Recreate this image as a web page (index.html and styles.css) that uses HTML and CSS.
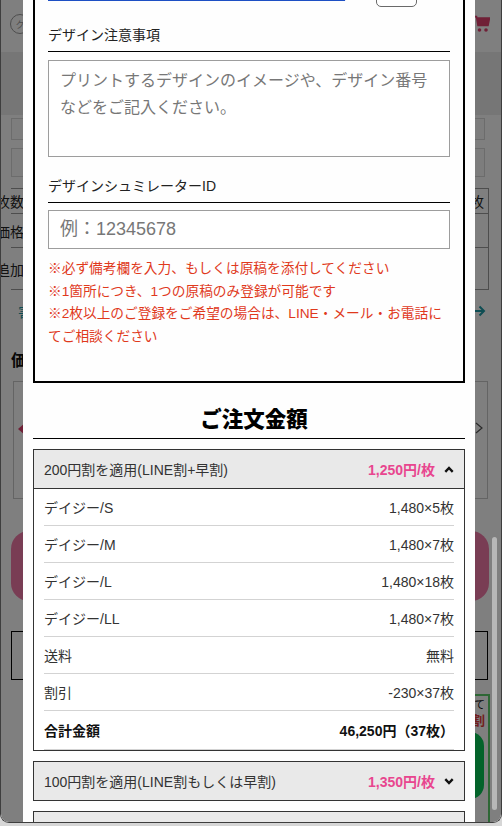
FILE: index.html
```html
<!DOCTYPE html>
<html lang="ja">
<head>
<meta charset="utf-8">
<title>ご注文金額</title>
<link rel="stylesheet" href="styles.css">
</head>
<body>
<div class="window">
  <div class="page">
    <header class="bg-header">
      <span class="bg-logo">ク</span>
      <svg class="bg-cart" width="17" height="19" viewBox="0 0 17 19">
        <path d="M0 1.5h3.5l1.5 9h10l1.5-7.5H4" fill="#e0406e" stroke="#e0406e" stroke-width="1.6"/>
        <circle cx="6.5" cy="15" r="1.8" fill="#e0406e"/>
        <circle cx="13" cy="15" r="1.8" fill="#e0406e"/>
      </svg>
    </header>
    <div class="bg-band"></div>
    <div class="bg-fields">
      <div class="bg-field"></div>
      <div class="bg-field tall"></div>
    </div>
    <div class="bg-table">
      <div class="bg-row r1"><span class="bg-cell">枚数</span><span class="bg-cell">枚</span></div>
      <div class="bg-row r2"><span class="bg-cell">価格</span><span class="bg-cell"></span></div>
      <div class="bg-row r3"><span class="bg-cell">追加</span><span class="bg-cell"></span></div>
    </div>
    <div class="bg-links">
      <span class="bg-teal">害虫</span>
      <svg width="13" height="12" viewBox="0 0 13 12"><path d="M0 6h11M6.5 1.5 11 6l-4.5 4.5" fill="none" stroke="#1c9aa6" stroke-width="2"/></svg>
    </div>
    <h3 class="bg-h">価格</h3>
    <div class="bg-carousel">
      <span class="bg-tri"></span>
      <svg width="9" height="12" viewBox="0 0 9 12"><path d="M1 1l6 5-6 5" fill="none" stroke="#555" stroke-width="1.2"/></svg>
    </div>
    <div class="bg-pill"></div>
    <div class="bg-box"></div>
    <div class="bg-green">
      <span class="bg-green-t">して</span>
      <span class="bg-green-r">割</span>
      <span class="bg-green-btn"></span>
    </div>
  </div>

  <div class="overlay">
    <div class="modal">
      <div class="design-box">
        <div class="file-row">
          <a class="file-link" href="#">original_design_upload_image_photography.jpg</a>
          <button class="file-btn" type="button"></button>
        </div>
        <div class="field-label">デザイン注意事項</div>
        <textarea class="field-area" placeholder="プリントするデザインのイメージや、デザイン番号などをご記入ください。"></textarea>
        <div class="field-label second">デザインシュミレーターID</div>
        <input class="field-input" type="text" placeholder="例：12345678">
        <p class="notes">※必ず備考欄を入力、もしくは原稿を添付してください<br>※1箇所につき、1つの原稿のみ登録が可能です<br>※2枚以上のご登録をご希望の場合は、LINE・メール・お電話に<br>てご相談ください</p>
      </div>

      <h2 class="summary-title">ご注文金額</h2>

      <section class="plan">
        <div class="plan-head">
          <span class="plan-name">200円割を適用(LINE割+早割)</span>
          <span class="plan-price">1,250円/枚</span>
          <svg class="chev" width="10" height="7" viewBox="0 0 10 7"><polyline points="1.3,5.8 5,2 8.7,5.8" fill="none" stroke="#111" stroke-width="2.4"/></svg>
        </div>
        <div class="plan-body">
          <div class="row"><span>デイジー/S</span><span>1,480×5枚</span></div>
          <div class="row"><span>デイジー/M</span><span>1,480×7枚</span></div>
          <div class="row"><span>デイジー/L</span><span>1,480×18枚</span></div>
          <div class="row"><span>デイジー/LL</span><span>1,480×7枚</span></div>
          <div class="row"><span>送料</span><span>無料</span></div>
          <div class="row"><span>割引</span><span>-230×37枚</span></div>
          <div class="row total"><span>合計金額</span><span>46,250円（37枚）</span></div>
        </div>
      </section>

      <section class="plan">
        <div class="plan-head">
          <span class="plan-name">100円割を適用(LINE割もしくは早割)</span>
          <span class="plan-price">1,350円/枚</span>
          <svg class="chev" width="10" height="7" viewBox="0 0 10 7"><polyline points="1.3,1.2 5,5 8.7,1.2" fill="none" stroke="#111" stroke-width="2.4"/></svg>
        </div>
      </section>

      <section class="plan">
        <div class="plan-head">
          <span class="plan-name">割引なし</span>
          <span class="plan-price">1,450円/枚</span>
          <svg class="chev" width="10" height="7" viewBox="0 0 10 7"><polyline points="1.3,1.2 5,5 8.7,1.2" fill="none" stroke="#111" stroke-width="2.4"/></svg>
        </div>
      </section>
    </div>
  </div>

  <div class="scrollbar"><div class="scroll-thumb"></div></div>
</div>
</body>
</html>
```

FILE: styles.css
```css
* { box-sizing: border-box; }

html, body {
  margin: 0;
  padding: 0;
}

body {
  background: #d6d6d6;
  font-family: "Liberation Sans", "Noto Sans CJK JP", sans-serif;
  color: #222;
}

.window {
  position: relative;
  width: 502px;
  height: 823px;
  overflow: hidden;
  border: 1px solid #3e3e3e;
  border-top: 0;
  border-radius: 0 0 9px 9px;
  background: #fff;
}

/* ---------- background page ---------- */
.page {
  height: 822px;
  background: #fff;
}

.bg-header {
  height: 52px;
  display: flex;
  align-items: center;
  justify-content: space-between;
  padding: 0 11px 4px 9px;
}

.bg-logo {
  width: 20px;
  height: 20px;
  border: 1px solid #9a9a9a;
  border-radius: 50%;
  font-size: 9px;
  color: #999;
  display: flex;
  align-items: center;
  justify-content: center;
}

.bg-band {
  height: 63px;
  background: #ececec;
}

.bg-fields {
  display: flex;
  flex-direction: column;
  gap: 8px;
  padding: 3px 16px 0 10px;
}

.bg-field {
  height: 22px;
  border: 1px solid #d8d8d8;
  background: #fafafa;
}

.bg-field.tall { height: 29px; }

.bg-table {
  margin: 11px 12px 0 10px;
  border-top: 1px solid #9a9a9a;
  border-right: 1px solid #9a9a9a;
}

.bg-row {
  display: flex;
  justify-content: space-between;
  align-items: center;
  border-bottom: 1px solid #9a9a9a;
  font-size: 14px;
  color: #222;
}

.bg-row.r1 { height: 25px; }
.bg-row.r2 { height: 34px; }
.bg-row.r3 { height: 42px; }

.bg-cell { padding: 0 4px; }
.bg-row .bg-cell:first-child { text-indent: -19px; }

.bg-links {
  display: flex;
  justify-content: space-between;
  align-items: center;
  height: 20px;
  margin-top: 11px;
  padding: 0 15px 0 17px;
}

.bg-teal {
  font-size: 14px;
  color: #1c9aa6;
}

.bg-h {
  margin: 29px 0 0;
  padding-left: 10px;
  font-size: 16px;
  line-height: 22px;
  font-weight: 700;
  color: #111;
}

.bg-carousel {
  height: 118px;
  margin: 9px 13px 0 12px;
  border: 1px solid #c8c8c8;
  display: flex;
  justify-content: space-between;
  align-items: flex-start;
  padding: 40px 3px 0 4px;
}

.bg-tri {
  width: 0;
  height: 0;
  border-top: 7px solid transparent;
  border-bottom: 7px solid transparent;
  border-right: 8px solid #e0406e;
}

.bg-pill {
  height: 70px;
  margin: 32px 12px 0 10px;
  border-radius: 18px;
  background: #f27aa9;
}

.bg-box {
  height: 49px;
  margin: 30px 13px 0 10px;
  border: 1px solid #000;
}

.bg-green {
  width: 150px;
  height: 130px;
  margin: 14px 11px 0 auto;
  border: 2px solid #5ccf6b;
  display: flex;
  flex-direction: column;
  align-items: flex-end;
  padding: 2px 3px 0 0;
}

.bg-green-t {
  font-size: 11px;
  line-height: 14px;
  color: #111;
}

.bg-green-r {
  font-size: 13px;
  line-height: 18px;
  font-weight: 700;
  color: #e23a3a;
}

.bg-green-btn {
  width: 120px;
  height: 67px;
  margin-top: 2px;
  margin-right: 1px;
  border-radius: 14px;
  background: #06c755;
}

/* ---------- overlay + modal ---------- */
.overlay {
  position: absolute;
  inset: 0;
  background: rgba(0, 0, 0, 0.5);
  overflow: hidden;
}

.modal {
  width: 452px;
  margin: -44px 0 0 22px;
  padding: 10px 10px 40px;
  background: #fefefe;
}

.design-box {
  border: 2px solid #000;
  padding: 13px 13px 33px;
}

.file-row {
  display: flex;
  justify-content: space-between;
  align-items: flex-start;
  height: 26px;
}

.file-link {
  font-size: 14px;
  line-height: 18px;
  padding-top: 2px;
  color: #1d4fc4;
  text-decoration: underline;
  text-underline-offset: 3px;
}

.file-btn {
  width: 41px;
  height: 26px;
  margin-right: 33px;
  border: 1px solid #6a6a6a;
  border-radius: 5px;
  background: #fff;
  padding: 0;
}

.field-label {
  margin-top: 17px;
  padding-bottom: 5px;
  border-bottom: 1px solid #000;
  font-size: 14px;
  line-height: 22px;
  color: #222;
}

.field-label.second { margin-top: 18px; }

.field-area,
.field-input {
  display: block;
  width: 100%;
  margin: 8px 0 0;
  border: 1px solid #9d9d9d;
  border-radius: 0;
  background: #fff;
  font-family: "Liberation Sans", "Noto Sans CJK JP", sans-serif;
  color: #333;
  outline: none;
}

.field-area {
  height: 97px;
  padding: 6px 11px;
  font-size: 16px;
  line-height: 27px;
  resize: none;
}

.field-input {
  height: 39px;
  margin-top: 7px;
  padding: 0 11px;
  font-size: 18px;
}

.field-area::placeholder,
.field-input::placeholder {
  color: #777;
  opacity: 1;
}

.notes {
  margin: 9px 0 0;
  font-size: 13.7px;
  line-height: 22.5px;
  color: #e0391c;
}

.summary-title {
  margin: 22px 0 10px;
  padding-bottom: 3px;
  border-bottom: 1px solid #000;
  text-align: center;
  font-size: 21.5px;
  line-height: 30px;
  font-weight: 900;
  color: #000;
  padding-left: 10px;
}

.plan {
  margin-bottom: 10px;
}

.plan-head {
  height: 40px;
  display: flex;
  align-items: center;
  padding: 0 10px;
  border: 1px solid #333;
  background: #e9e9e9;
  font-size: 14px;
  color: #333;
}

.plan-name { flex: 1; }

.plan-price {
  font-weight: 700;
  color: #e8468f;
}

.chev { margin-left: 9px; }

.plan-body {
  border: 1px solid #333;
  border-top: 0;
  padding: 0 10px;
  background: #fff;
}

.row {
  height: 37px;
  display: flex;
  justify-content: space-between;
  align-items: center;
  border-bottom: 1px solid #d3d3d3;
  font-size: 14px;
  color: #333;
  padding-bottom: 1px;
}

.row.total {
  height: 39px;
  font-weight: 700;
  color: #111;
}

/* ---------- page scrollbar ---------- */
.scrollbar {
  position: absolute;
  top: 0;
  right: 3px;
  width: 6px;
  height: 822px;
}

.scroll-thumb {
  margin-top: 537px;
  width: 5px;
  height: 273px;
  border-radius: 3px;
  background: #b7b7b7;
}
```
